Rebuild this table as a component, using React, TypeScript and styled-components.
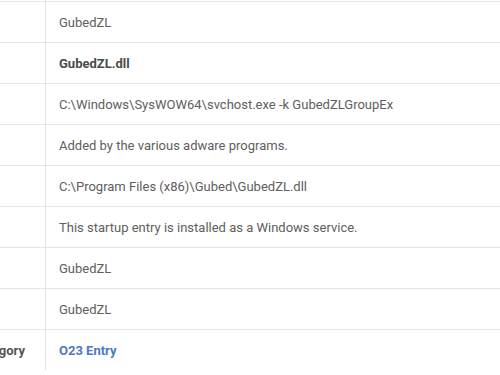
import styled, { createGlobalStyle } from "styled-components";

const GlobalStyle = createGlobalStyle`
  html, body {
    margin: 0;
    padding: 0;
    background: #ffffff;
  }
  body {
    font-family: Roboto, "Noto Sans", Arial, sans-serif;
    overflow: hidden;
  }
`;

const Table = styled.div`
  display: grid;
  grid-template-columns: 120px 1fr;
  margin-left: -74px;
  margin-top: -39px;
  width: calc(100% + 74px);
`;

const Row = styled.div<{ $last?: boolean }>`
  display: contents;
  & > div {
    border-bottom: ${(p) => (p.$last ? "none" : "1px solid #e4e4e4")};
  }
`;

const Label = styled.div`
  height: 40px;
  box-sizing: content-box;
  display: flex;
  align-items: center;
  justify-content: flex-end;
  padding-right: 20px;
  border-right: 1px solid #e4e4e4;
  font-size: 13px;
  font-weight: 700;
  color: #555555;
`;

const Value = styled.div<{ $bold?: boolean; $link?: boolean }>`
  height: 40px;
  box-sizing: content-box;
  display: flex;
  align-items: center;
  padding-left: 13px;
  font-size: 13px;
  font-weight: ${(p) => (p.$bold || p.$link ? 700 : 400)};
  color: ${(p) => (p.$link ? "#4d79c4" : p.$bold ? "#4a4a4a" : "#5e5e5e")};
  white-space: nowrap;
`;

type Entry = { label: string; value: string; bold?: boolean; link?: boolean };

const entries: Entry[] = [
  { label: "", value: "" },
  { label: "", value: "GubedZL" },
  { label: "", value: "GubedZL.dll", bold: true },
  { label: "", value: "C:\\Windows\\SysWOW64\\svchost.exe -k GubedZLGroupEx" },
  { label: "", value: "Added by the various adware programs." },
  { label: "", value: "C:\\Program Files (x86)\\Gubed\\GubedZL.dll" },
  { label: "", value: "This startup entry is installed as a Windows service." },
  { label: "", value: "GubedZL" },
  { label: "", value: "GubedZL" },
  { label: "Category", value: "O23 Entry", link: true },
];

function App() {
  return (
    <>
      <GlobalStyle />
      <Table>
        {entries.map((e, i) => (
          <Row key={i} $last={i === entries.length - 1}>
            <Label>{e.label}</Label>
            <Value $bold={e.bold} $link={e.link}>
              {e.value}
            </Value>
          </Row>
        ))}
      </Table>
    </>
  );
}

export default App;
